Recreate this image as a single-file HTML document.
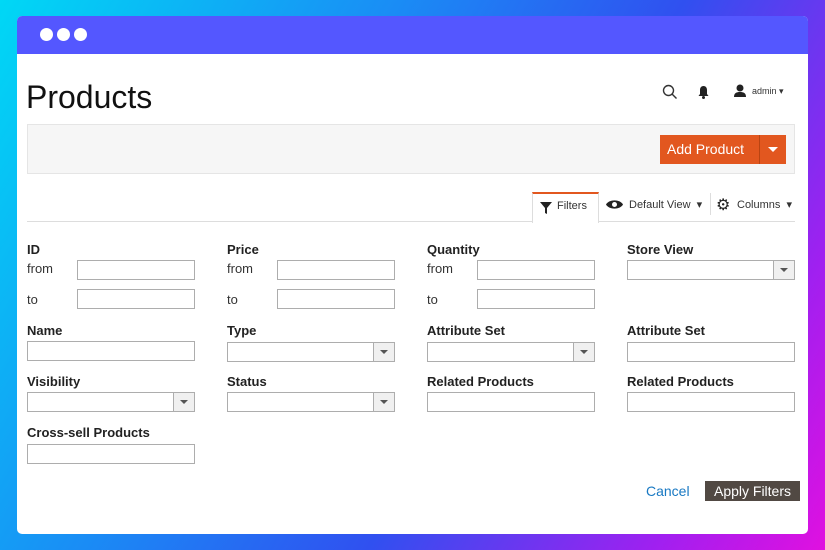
<!DOCTYPE html>
<html><head><style>
*{margin:0;padding:0;box-sizing:border-box}
body{width:825px;height:550px;overflow:hidden;position:relative;font-family:"Liberation Sans",sans-serif;
background:linear-gradient(120deg,#00d8f5 0%,#1a8cf5 35%,#3050f0 60%,#a020f0 85%,#e010e0 100%);}
.win{position:absolute;left:17px;top:16px;width:791px;height:518px;background:#fff;border-radius:5px;overflow:hidden}
.bar{height:38px;background:#5457ff}
.dot{position:absolute;top:12px;width:13px;height:13px;border-radius:50%;background:#fff}
.a{position:absolute}
.lbl{position:absolute;font-size:13px;color:#222;font-weight:bold}
.t{position:absolute;font-size:13px;color:#333}
.in{position:absolute;width:168px;height:20px;border:1px solid #adadad;background:#fff}
.sel:after{content:"";position:absolute;right:0;top:0;width:20px;height:18px;background:#f0f0f0;border-left:1px solid #adadad}
.sel:before{content:"";position:absolute;right:6px;top:7px;border:4px solid transparent;border-top:4px solid #555;z-index:2}
</style></head><body>
<div class="win">
<div class="bar"></div>
<div class="dot" style="left:23px"></div><div class="dot" style="left:40px"></div><div class="dot" style="left:57px"></div>
<div class="a" style="left:9px;top:63px;font-size:32px;color:#111">Products</div>
<svg class="a" style="left:645px;top:68px" width="16" height="16"><circle cx="6.5" cy="6.5" r="5" fill="none" stroke="#333" stroke-width="1.4"/><line x1="10" y1="10" x2="14.5" y2="14.5" stroke="#333" stroke-width="1.4"/></svg>
<svg class="a" style="left:680px;top:69px" width="13" height="14"><path d="M6.5 1C4 1 3 3 3 5v4L1.5 11h10L10 9V5c0-2-1-4-3.5-4z" fill="#222"/><circle cx="6.5" cy="12.5" r="1.5" fill="#222"/></svg>
<svg class="a" style="left:716px;top:68px" width="14" height="14"><circle cx="7" cy="4" r="3.5" fill="#222"/><path d="M1 13c0-4 2.5-5 6-5s6 1 6 5z" fill="#222"/></svg>
<div class="a" style="left:735px;top:70px;font-size:9px;color:#333">admin ▾</div>
<div class="a" style="left:10px;top:108px;width:768px;height:50px;background:#f6f6f6;border:1px solid #e5e5e5"></div>
<div class="a" style="left:643px;top:119px;width:126px;height:29px;background:#e2571f"></div>
<div class="a" style="left:742px;top:119px;width:1px;height:29px;background:#b94412"></div>
<div class="a" style="left:650px;top:125px;font-size:14px;color:#fff">Add Product</div>
<div class="a" style="left:751px;top:131px;border:5px solid transparent;border-top:5px solid #fff"></div>
<div class="a" style="left:10px;top:205px;width:768px;height:1px;background:#ddd"></div>
<div class="a" style="left:515px;top:176px;width:67px;height:31px;background:#fff;border:1px solid #ddd;border-top:2px solid #e2571f;border-bottom:none"></div>
<svg class="a" style="left:523px;top:186px" width="12" height="12"><path d="M0 0h12L7 6v6L5 11V6z" fill="#222"/></svg>
<div class="a" style="left:540px;top:184px;font-size:11px;color:#333">Filters</div>
<svg class="a" style="left:589px;top:183px" width="17" height="11"><path d="M0 5.5C3 0 14 0 17 5.5C14 11 3 11 0 5.5z" fill="#222"/><circle cx="8.5" cy="5.5" r="2.5" fill="#fff"/></svg>
<div class="a" style="left:612px;top:182px;font-size:11px;color:#333">Default View&nbsp; ▾</div>
<div class="a" style="left:693px;top:177px;width:1px;height:22px;background:#ddd"></div>
<div class="a" style="left:699px;top:179px;font-size:16px;color:#222">⚙</div>
<div class="a" style="left:720px;top:182px;font-size:11px;color:#333">Columns&nbsp; ▾</div>

<div class="lbl" style="left:10px;top:226px">ID</div>
<div class="t" style="left:10px;top:245px">from</div><div class="in" style="left:60px;top:244px;width:118px"></div>
<div class="t" style="left:10px;top:276px">to</div><div class="in" style="left:60px;top:273px;width:118px"></div>
<div class="lbl" style="left:210px;top:226px">Price</div>
<div class="t" style="left:210px;top:245px">from</div><div class="in" style="left:260px;top:244px;width:118px"></div>
<div class="t" style="left:210px;top:276px">to</div><div class="in" style="left:260px;top:273px;width:118px"></div>
<div class="lbl" style="left:410px;top:226px">Quantity</div>
<div class="t" style="left:410px;top:245px">from</div><div class="in" style="left:460px;top:244px;width:118px"></div>
<div class="t" style="left:410px;top:276px">to</div><div class="in" style="left:460px;top:273px;width:118px"></div>
<div class="lbl" style="left:610px;top:226px">Store View</div><div class="in sel" style="left:610px;top:244px"></div>

<div class="lbl" style="left:10px;top:307px">Name</div><div class="in" style="left:10px;top:325px"></div>
<div class="lbl" style="left:210px;top:307px">Type</div><div class="in sel" style="left:210px;top:326px"></div>
<div class="lbl" style="left:410px;top:307px">Attribute Set</div><div class="in sel" style="left:410px;top:326px"></div>
<div class="lbl" style="left:610px;top:307px">Attribute Set</div><div class="in" style="left:610px;top:326px"></div>

<div class="lbl" style="left:10px;top:358px">Visibility</div><div class="in sel" style="left:10px;top:376px"></div>
<div class="lbl" style="left:210px;top:358px">Status</div><div class="in sel" style="left:210px;top:376px"></div>
<div class="lbl" style="left:410px;top:358px">Related Products</div><div class="in" style="left:410px;top:376px"></div>
<div class="lbl" style="left:610px;top:358px">Related Products</div><div class="in" style="left:610px;top:376px"></div>

<div class="lbl" style="left:10px;top:409px">Cross-sell Products</div><div class="in" style="left:10px;top:428px"></div>

<div class="a" style="left:629px;top:467px;font-size:14px;color:#1979c3">Cancel</div>
<div class="a" style="left:688px;top:465px;width:95px;height:20px;background:#514943;color:#fff;font-size:14px;text-align:center;line-height:20px">Apply Filters</div>
</div>
</body></html>
